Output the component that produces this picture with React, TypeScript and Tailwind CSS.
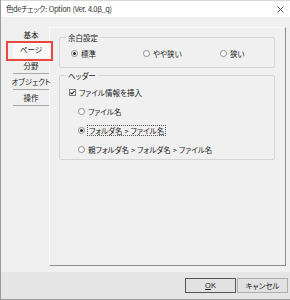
import React from "react";

function Radio({ checked = false }: { checked?: boolean }) {
  return (
    <span className="w-[7px] h-[7px] rounded-full border border-[#8a8a8a] bg-white flex items-center justify-center shrink-0">
      {checked && <span className="w-[3px] h-[3px] rounded-full bg-[#222]" />}
    </span>
  );
}

function Check() {
  return (
    <span className="w-[7px] h-[7px] border border-[#7a7a7a] bg-white flex items-center justify-center shrink-0">
      <svg width="5" height="5" viewBox="0 0 5 5">
        <path d="M0.5 2.5 L2 4 L4.5 0.8" stroke="#222" strokeWidth="1.1" fill="none" />
      </svg>
    </span>
  );
}

function Gt() {
  return <span className="mx-[2px]">&gt;</span>;
}

const navItems = ["分野", "オブジェクト", "操作"];

export default function App() {
  return (
    <div className="w-[290px] h-[300px] flex flex-col bg-[#f0f0f0] border-l border-b border-[#9a9a9a] text-[7.5px] leading-none text-[#1a1a1a] overflow-hidden font-['Noto_Sans_CJK_JP','Noto_Sans',sans-serif] [font-feature-settings:'palt']">
      {/* title bar */}
      <div className="h-[17px] bg-white flex items-center justify-between pl-[5px] pr-[6px] border-t border-[#d8d8d8] shrink-0">
        <span className="tracking-[-0.4px] text-[#333]">
          色deチェック:<span className="ml-[2px]">Option</span>
          <span className="ml-[2px]">(Ver.</span>
          <span className="ml-[2px]">4.0β_q)</span>
        </span>
        <svg width="7" height="7" viewBox="0 0 7 7">
          <path d="M0.5 0.5 L6.5 6.5 M6.5 0.5 L0.5 6.5" stroke="#444" strokeWidth="0.9" />
        </svg>
      </div>

      {/* body */}
      <div className="flex flex-1">
        <div className="w-[48px] pt-[10px] relative">
          <div className="ml-[12px] w-[36px] h-[15px] flex items-center justify-center">基本</div>
          <div className="ml-[12px] w-[36px] h-[16px] flex items-center justify-center bg-[#f8f8f8]">ページ</div>
          {navItems.map((n) => (
            <div
              key={n}
              className="ml-[12px] w-[36px] h-[16px] flex items-center justify-center border-b border-[#a8a8a8] whitespace-nowrap"
            >
              {n}
            </div>
          ))}
          {/* annotation highlight */}
          <div className="absolute left-[5px] top-[24px] w-[47px] h-[20px] border-2 border-[#e8493f]" />
        </div>

        <div className="mt-[10px] w-[237px] h-[239px] border-l border-t border-[#fbfbfb] border-r border-b border-r-[#8c8c8c] border-b-[#8c8c8c] pl-[9px] pt-[6px] flex flex-col gap-[4px]">
          <fieldset className="w-[216px] h-[34px] border border-[#d5d5d5] rounded-[2px]">
            <legend className="ml-[6px] px-[2px]">余白設定</legend>
            <div className="flex items-center pl-[11px] pt-[8px]">
              <label className="w-[72px] flex items-center gap-[3px]">
                <Radio checked />
                <span>標準</span>
              </label>
              <label className="w-[77px] flex items-center gap-[3px]">
                <Radio />
                <span>やや狭い</span>
              </label>
              <label className="flex items-center gap-[3px]">
                <Radio />
                <span>狭い</span>
              </label>
            </div>
          </fieldset>

          <fieldset className="w-[216px] h-[88px] border border-[#d5d5d5] rounded-[2px]">
            <legend className="ml-[6px] px-[2px]">ヘッダー</legend>
            <div className="flex flex-col pl-[9px] pt-[8px]">
              <label className="flex items-center gap-[3px] h-[10px]">
                <Check />
                <span>ファイル情報を挿入</span>
              </label>
              <div className="flex flex-col pl-[9px] pt-[9px] gap-[9px]">
                <label className="flex items-center gap-[3px] h-[10px]">
                  <Radio />
                  <span>ファイル名</span>
                </label>
                <label className="flex items-center gap-[2px] h-[10px]">
                  <Radio checked />
                  <span className="border border-dotted border-[#555] px-[1px] py-[1px]">
                    フォルダ名<Gt />ファイル名
                  </span>
                </label>
                <label className="flex items-center gap-[3px] h-[10px]">
                  <Radio />
                  <span>
                    親フォルダ名<Gt />フォルダ名<Gt />ファイル名
                  </span>
                </label>
              </div>
            </div>
          </fieldset>
        </div>
      </div>

      {/* button bar */}
      <div className="h-[27px] bg-[#e5e5e5] flex items-center justify-end pr-[2px] gap-[1px] shrink-0">
        <button className="w-[51px] h-[15px] bg-[#e1e1e1] border border-[#555] flex items-center justify-center font-['Liberation_Sans',sans-serif] text-[7.5px]">
          <span className="underline">O</span>K
        </button>
        <button className="w-[51px] h-[15px] bg-[#e1e1e1] border border-[#adadad] flex items-center justify-center">
          キャンセル
        </button>
      </div>
    </div>
  );
}
